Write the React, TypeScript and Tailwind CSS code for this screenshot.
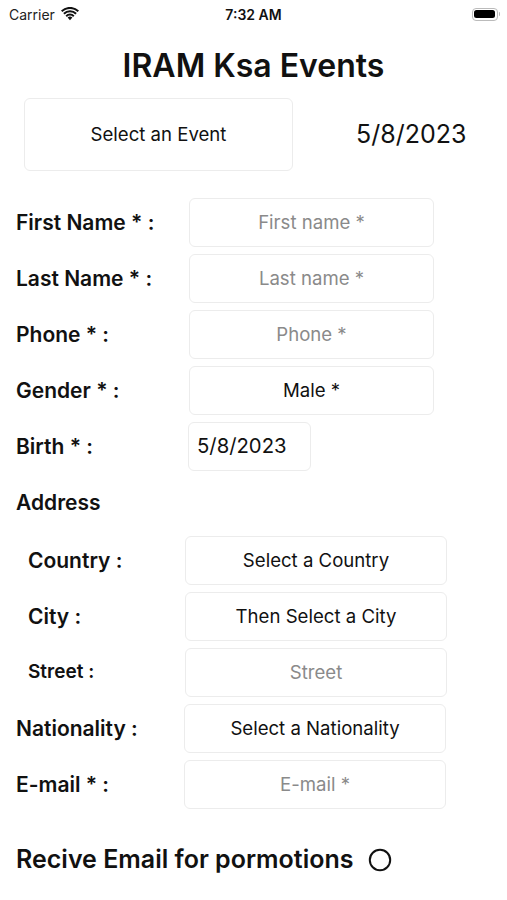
import React from "react";

const font = { fontFamily: "Inter, 'Noto Sans', sans-serif" };

function Box({ children, className = "", muted = false }: { children: React.ReactNode; className?: string; muted?: boolean }) {
  return (
    <div
      className={`flex items-center justify-center rounded-[6px] border border-[#ececec] bg-white text-[18.6px] ${muted ? "text-[#8a8a8a]" : "text-[#111]"} ${className}`}
    >
      {children}
    </div>
  );
}

function Row({ label, children, labelClass = "pl-[16px] w-[189px]", labelSize = "text-[21px]" }: { label: string; children: React.ReactNode; labelClass?: string; labelSize?: string }) {
  return (
    <div className="flex h-[49px] items-center">
      <div className={`${labelClass} ${labelSize} font-semibold text-[#111] shrink-0`}>{label}</div>
      {children}
    </div>
  );
}

export default function App() {
  return (
    <div className="relative h-[900px] w-[507px] overflow-hidden bg-white" style={font}>
      {/* status bar */}
      <div className="relative flex h-[28px] items-center pl-[9px] pr-[7px]">
        <span className="text-[14px] text-[#222]">Carrier</span>
        <svg className="ml-[6px]" width="18" height="14" viewBox="0 0 18 14">
          <path d="M9 13.2 L6.6 10.6 A3.4 3.4 0 0 1 11.4 10.6 Z" fill="#111" />
          <path d="M4.5 8.4 A6.4 6.4 0 0 1 13.5 8.4 L12.1 9.9 A4.4 4.4 0 0 0 5.9 9.9 Z" fill="#111" />
          <path d="M2.2 6 A9.6 9.6 0 0 1 15.8 6 L14.4 7.5 A7.6 7.6 0 0 0 3.6 7.5 Z" fill="#111" />
          <path d="M0 3.6 A12.8 12.8 0 0 1 18 3.6 L16.6 5.1 A10.8 10.8 0 0 0 1.4 5.1 Z" fill="#111" />
        </svg>
        <span className="absolute left-1/2 -translate-x-1/2 text-[14px] font-semibold text-[#111]">7:32 AM</span>
        <div className="ml-auto flex items-center">
          <div className="flex h-[13px] w-[26px] items-center rounded-[4px] border border-[#bbb] p-[1.5px]">
            <div className="h-full w-full rounded-[2.5px] bg-black" />
          </div>
          <div className="ml-[1px] h-[4px] w-[1.5px] rounded-r bg-[#bbb]" />
        </div>
      </div>

      {/* title */}
      <div className="mt-[19px] text-center text-[32px] font-semibold leading-[38px] text-[#111]">IRAM Ksa Events</div>

      {/* event row */}
      <div className="mt-[13px] flex items-center">
        <Box className="ml-[24px] h-[73px] w-[269px]">Select an Event</Box>
        <div className="ml-[63px] text-[25px] text-[#111]">5/8/2023</div>
      </div>

      {/* form */}
      <div className="mt-[27px] flex flex-col gap-[7px]">
        <Row label="First Name * :">
          <Box muted className="h-[49px] w-[245px]">First name *</Box>
        </Row>
        <Row label="Last Name * :">
          <Box muted className="h-[49px] w-[245px]">Last name *</Box>
        </Row>
        <Row label="Phone * :">
          <Box muted className="h-[49px] w-[245px]">Phone *</Box>
        </Row>
        <Row label="Gender * :">
          <Box className="h-[49px] w-[245px]">Male *</Box>
        </Row>
        <Row label="Birth * :" labelClass="pl-[16px] w-[188px]">
          <div className="flex h-[49px] w-[123px] items-center rounded-[6px] border border-[#ececec] pl-[8px] text-[20.3px] text-[#111]">5/8/2023</div>
        </Row>
        <div className="mb-[2px] flex h-[49px] items-center pl-[16px] text-[21px] font-semibold text-[#111]">Address</div>
        <Row label="Country :" labelClass="pl-[28px] w-[185px]">
          <Box className="h-[49px] w-[262px]">Select a Country</Box>
        </Row>
        <Row label="City :" labelClass="pl-[28px] w-[185px]">
          <Box className="h-[49px] w-[262px]">Then Select a City</Box>
        </Row>
        <Row label="Street :" labelClass="pl-[28px] w-[185px]" labelSize="text-[19px]">
          <Box muted className="h-[49px] w-[262px]">Street</Box>
        </Row>
        <Row label="Nationality :" labelClass="pl-[16px] w-[184px]">
          <Box className="h-[49px] w-[262px]">Select a Nationality</Box>
        </Row>
        <Row label="E-mail * :" labelClass="pl-[16px] w-[184px]">
          <Box muted className="h-[49px] w-[262px]">E-mail *</Box>
        </Row>
      </div>

      <div className="mt-[32px] flex items-center pl-[16px]">
        <span className="text-[25px] font-semibold text-[#111]">Recive Email for pormotions</span>
        <svg className="ml-[15px]" width="24" height="24" viewBox="0 0 24 24">
          <circle cx="12" cy="12" r="10.2" fill="none" stroke="#111" strokeWidth="2" />
        </svg>
      </div>
    </div>
  );
}
